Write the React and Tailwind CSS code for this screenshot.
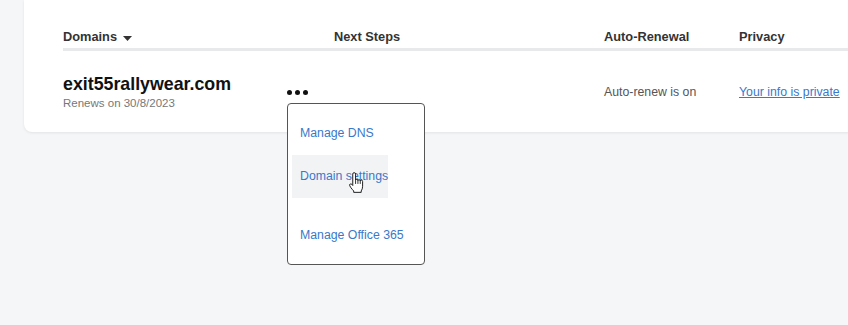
import React from "react";

function HandCursor() {
  return (
    <svg width="15" height="21" viewBox="0 0 16 22" className="absolute z-20 left-[349px] top-[172px]">
      <path
        d="M4 2 Q4 0.5 5.5 0.5 Q7 0.5 7 2 L7 8.5 Q7 7.5 8.25 7.5 Q9.5 7.5 9.5 9 Q9.5 8 10.75 8 Q12 8 12 9.5 Q12 8.5 13.25 8.5 Q14.5 8.5 14.5 10 L14.5 15 Q14.5 18 13 20 L13 21.5 L5 21.5 L5 20 Q3.5 18.5 2 16.5 L0.8 14.5 Q0.2 13.2 1.3 12.6 Q2.3 12.1 3 13 L4 14.2 Z"
        fill="#fff"
        stroke="#111"
        strokeWidth="1"
        strokeLinejoin="round"
      />
      <path d="M7 8.5 L7 12.5 M9.5 9 L9.5 12.5 M12 9.5 L12 12.5" stroke="#111" strokeWidth="0.9" />
    </svg>
  );
}

export default function App() {
  return (
    <div
      className="relative w-[848px] h-[325px] overflow-hidden bg-[#f5f6f8]"
      style={{ fontFamily: '"Liberation Sans", Arial, sans-serif' }}
    >
      <div className="ml-[24px] mr-[-20px] bg-white rounded-b-[8px] shadow-[0_1px_3px_rgba(0,0,0,0.08)] pl-[39px] pt-[29px] pb-[22px]">
        <div className="flex border-b-[3px] border-[#e8e9eb] pb-[3px] text-[12.8px] leading-[16px] font-bold text-[#333]">
          <div className="w-[271px] flex items-center gap-[6px]">
            <span>Domains</span>
            <svg width="9" height="5" viewBox="0 0 9 5" className="mt-[2px]">
              <path d="M0 0 L9 0 L4.5 5 Z" fill="#333" />
            </svg>
          </div>
          <div className="w-[270px]">Next Steps</div>
          <div className="w-[135px]">Auto-Renewal</div>
          <div>Privacy</div>
        </div>

        <div className="flex items-center pt-[23px]">
          <div className="w-[224px] flex flex-col gap-[2px]">
            <div className="text-[17.8px] leading-[20px] font-bold text-[#111]">exit55rallywear.com</div>
            <div className="text-[11.5px] leading-[14px] text-[#777]">Renews on 30/8/2023</div>
          </div>
          <div className="w-[317px]">
            <div className="relative w-[21px] flex gap-[3px]">
              <span className="w-[5px] h-[5px] rounded-full bg-[#111]" />
              <span className="w-[5px] h-[5px] rounded-full bg-[#111]" />
              <span className="w-[5px] h-[5px] rounded-full bg-[#111]" />
              <div className="absolute left-0 top-[13px] z-10 w-[138px] h-[162px] bg-white border border-[#555] rounded-[4px] pt-[8px] pl-[4px] flex flex-col text-[12.3px] text-[#3a78c9]">
                <div className="h-[43px] flex items-center pl-[8px]">Manage DNS</div>
                <div className="h-[43px] flex items-center pl-[8px] w-[96px] bg-[#f2f3f5] whitespace-nowrap">Domain settings</div>
                <div className="h-[43px] mt-[16px] flex items-center pl-[8px] whitespace-nowrap">Manage Office 365</div>
              </div>
            </div>
          </div>
          <div className="w-[135px] text-[12.3px] text-[#555]">Auto-renew is on</div>
          <div className="text-[12.3px] text-[#3a78c9] underline whitespace-nowrap">Your info is private</div>
        </div>
      </div>
      <HandCursor />
    </div>
  );
}
